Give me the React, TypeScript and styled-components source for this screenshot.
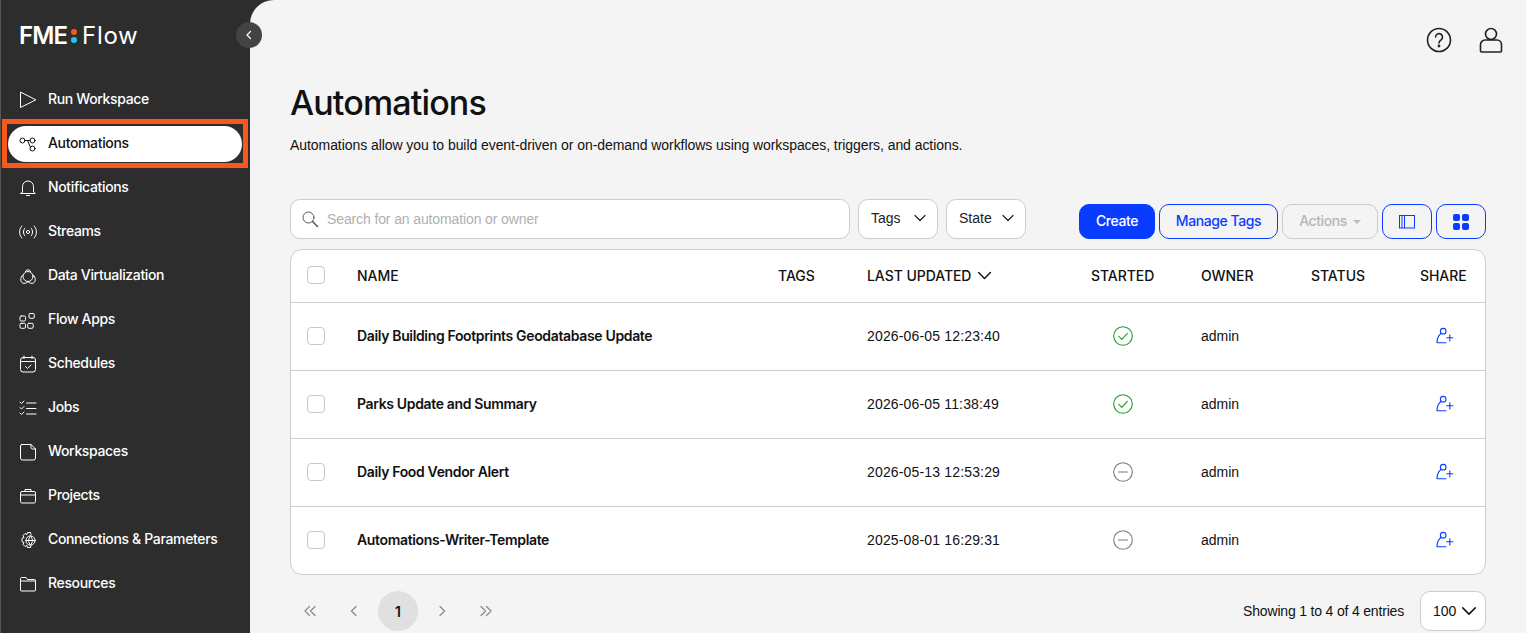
import React from 'react';
import styled, { createGlobalStyle } from 'styled-components';

const GlobalStyle = createGlobalStyle`
  html, body {
    margin: 0;
    padding: 0;
    height: 100%;
    overflow: hidden;
    background: #2d2d2d;
    font-family: 'Inter', 'Liberation Sans', sans-serif;
    color: #111;
  }
  * { box-sizing: border-box; }
`;

const BODY_FONT = "'Liberation Sans', Arial, sans-serif";

const Shell = styled.div`
  display: flex;
  width: 1526px;
  height: 633px;
  overflow: hidden;
  background: #2d2d2d;
`;

const Sidebar = styled.aside`
  position: relative;
  flex: 0 0 250px;
  border-left: 1px solid #555;
  padding-top: 25px;
`;

const Logo = styled.div`
  display: flex;
  align-items: center;
  height: 22px;
  margin-left: 18px;
  color: #fff;
  font-size: 24px;
  line-height: 22px;
`;

const LogoFme = styled.span`
  font-weight: 600;
  letter-spacing: -0.9px;
`;

const LogoDots = styled.span`
  display: flex;
  flex-direction: column;
  gap: 2px;
  margin: 0 5px 0 4px;
  &::before, &::after {
    content: '';
    width: 6px;
    height: 6px;
    border-radius: 50%;
    background: #f7581c;
  }
  &::after { background: #1fc8f4; }
`;

const LogoFlow = styled.span`
  font-weight: 400;
  letter-spacing: 0.7px;
`;

const CollapseButton = styled.div`
  position: absolute;
  top: 22px;
  left: 235px;
  z-index: 3;
  width: 26px;
  height: 26px;
  border-radius: 50%;
  background: #434343;
  color: #fff;
  display: flex;
  align-items: center;
  justify-content: center;
`;

const NavList = styled.nav`
  display: flex;
  flex-direction: column;
  margin-top: 31px;
`;

const NavItem = styled.div<{ $active?: boolean }>`
  position: relative;
  display: flex;
  align-items: center;
  gap: 11px;
  height: 36px;
  margin: 4px 8px 4px 7px;
  padding-left: 11px;
  border-radius: 18px;
  font-size: 14px;
  font-weight: 500;
  letter-spacing: -0.35px;
  color: ${p => (p.$active ? '#111' : '#fff')};
  background: ${p => (p.$active ? '#fff' : 'transparent')};
  svg { flex: 0 0 18px; }
`;

const NavLabel = styled.span`
  margin-bottom: 4px;
`;

const Highlight = styled.div`
  position: absolute;
  inset: -7px -6px -6px -6px;
  border: 5px solid #f7581c;
  pointer-events: none;
`;

const Main = styled.main`
  flex: 1;
  background: #f4f4f4;
  border-top-left-radius: 24px;
  padding: 0 40px;
  min-width: 0;
`;

const TopBar = styled.div`
  display: flex;
  justify-content: flex-end;
  align-items: center;
  gap: 26px;
  height: 80px;
  margin-right: -18px;
  color: #222;
`;

const Title = styled.h1`
  margin: 3px 0 0;
  font-size: 34px;
  line-height: 40px;
  font-weight: 500;
  letter-spacing: -0.85px;
  color: #111;
`;

const Description = styled.p`
  margin: 12px 0 0;
  font-family: ${BODY_FONT};
  font-size: 14px;
  line-height: 20px;
  letter-spacing: -0.065px;
  color: #111;
`;

const Toolbar = styled.div`
  display: flex;
  align-items: flex-start;
  margin-top: 44px;
  height: 40px;
`;

const SearchBox = styled.div`
  display: flex;
  align-items: center;
  gap: 8px;
  width: 560px;
  height: 40px;
  padding-left: 11px;
  background: #fff;
  border: 1px solid #ccc;
  border-radius: 10px;
  color: #555;
`;

const Placeholder = styled.span`
  font-family: ${BODY_FONT};
  font-size: 14px;
  letter-spacing: -0.12px;
  color: #b0b0b0;
`;

const SelectBox = styled.div<{ $width: number }>`
  display: flex;
  align-items: center;
  justify-content: space-between;
  width: ${p => p.$width}px;
  height: 40px;
  margin-left: 8px;
  padding: 0 9px 2px 12px;
  background: #fff;
  border: 1px solid #ccc;
  border-radius: 10px;
  font-family: ${BODY_FONT};
  font-size: 14px;
  color: #222;
`;

const ButtonGroup = styled.div`
  display: flex;
  gap: 4px;
  margin-left: auto;
  margin-top: 5px;
`;

const Button = styled.div<{ $variant: 'primary' | 'outline' | 'disabled'; $width: number }>`
  display: flex;
  align-items: center;
  justify-content: center;
  gap: 6px;
  width: ${p => p.$width}px;
  height: 35px;
  padding-bottom: ${p => (p.$variant === 'primary' || p.$variant === 'disabled' ? 2 : 0)}px;
  border-radius: 10px;
  font-size: 14px;
  font-weight: 500;
  letter-spacing: -0.42px;
  border: 1px solid ${p => (p.$variant === 'disabled' ? '#ccc' : '#0a3cff')};
  background: ${p => (p.$variant === 'primary' ? '#0a3cff' : 'transparent')};
  color: ${p => (p.$variant === 'primary' ? '#fff' : p.$variant === 'disabled' ? '#b5b5b5' : '#0a3cff')};
`;

const ButtonLabel = styled.span`
  margin-bottom: 2px;
`;

const Caret = styled.span`
  width: 0;
  height: 0;
  margin-top: 2px;
  border-left: 4px solid transparent;
  border-right: 4px solid transparent;
  border-top: 4px solid #bbb;
`;

const Table = styled.div`
  margin-top: 10px;
  background: #fff;
  border: 1px solid #ccc;
  border-radius: 12px;
`;

const Row = styled.div<{ $header?: boolean }>`
  display: grid;
  grid-template-columns: 66px 421px 89px 224px 110px 110px 109px 1fr;
  align-items: center;
  height: ${p => (p.$header ? 52 : 68)}px;
  padding-bottom: 2px;
  font-family: ${BODY_FONT};
  font-size: 14px;
  color: #111;
  & + & { border-top: 1px solid #ccc; }
`;

const HeaderCell = styled.div`
  display: flex;
  align-items: center;
  gap: 4px;
  font-family: 'Inter', sans-serif;
  font-weight: 500;
  letter-spacing: -0.05px;
`;

const CheckCell = styled.div`
  display: flex;
  padding-left: 16px;
`;

const Checkbox = styled.div`
  width: 18px;
  height: 18px;
  border: 1px solid #c8c8c8;
  border-radius: 4px;
  background: #fff;
`;

const NameCell = styled.div`
  font-family: 'Inter', sans-serif;
  font-weight: 600;
  letter-spacing: -0.35px;
`;

const DateCell = styled.div`
  letter-spacing: 0.16px;
`;

const StartedCell = styled.div`
  display: flex;
  justify-content: center;
  width: 64px;
`;

const ShareCell = styled.div`
  display: flex;
  justify-content: center;
  width: 49px;
  color: #0a3cff;
`;

const Footer = styled.div`
  display: flex;
  align-items: center;
  justify-content: space-between;
  margin-top: 16px;
  height: 40px;
`;

const Pager = styled.div`
  display: flex;
  align-items: center;
  gap: 4px;
`;

const PageButton = styled.div<{ $current?: boolean }>`
  display: flex;
  align-items: center;
  justify-content: center;
  width: 40px;
  height: 40px;
  border-radius: 50%;
  font-size: 14px;
  font-weight: 600;
  color: ${p => (p.$current ? '#111' : '#8e8e8e')};
  background: ${p => (p.$current ? '#e0e0e0' : 'transparent')};
`;

const Entries = styled.div`
  display: flex;
  align-items: center;
  gap: 16px;
  font-family: ${BODY_FONT};
  font-size: 14px;
  color: #111;
`;

const EntriesText = styled.span`
  letter-spacing: -0.18px;
`;

const PageSize = styled.div`
  display: flex;
  align-items: center;
  justify-content: space-between;
  width: 66px;
  height: 40px;
  padding: 0 6px 0 12px;
  background: #fff;
  border: 1px solid #ccc;
  border-radius: 10px;
`;

type IconProps = { size?: number; children: React.ReactNode };

const Icon = ({ size = 18, children }: IconProps) => (
  <svg width={size} height={size} viewBox="0 0 18 18" fill="none" stroke="currentColor" strokeWidth={1} strokeLinecap="round" strokeLinejoin="round">
    {children}
  </svg>
);

const Chevron = ({ size = 16 }: { size?: number }) => (
  <svg width={size} height={size} viewBox="0 0 16 16" fill="none" stroke="currentColor" strokeWidth={1.2} strokeLinecap="round" strokeLinejoin="round">
    <path d="M3 5.500 8 10.500l5-5" />
  </svg>
);

const PagerIcon = ({ d }: { d: string }) => (
  <svg width="16" height="16" viewBox="0 0 16 16" fill="none" stroke="currentColor" strokeWidth={1.4} strokeLinecap="round" strokeLinejoin="round">
    <path d={d} />
  </svg>
);

const navIcons: Record<string, React.ReactNode> = {
  run: <path d="M1.500 1.500v15L16.500 9z" />,
  automations: (
    <>
      <circle cx="3.500" cy="5.500" r="2.500" />
      <circle cx="13.500" cy="5.500" r="2.500" />
      <circle cx="13.500" cy="13.500" r="2.500" />
      <path d="M6 5.500h5M8.500 5.500l2.800 6.500" />
    </>
  ),
  notifications: (
    <>
      <path d="M3.500 13V7.500a5.500 5.500 0 0 1 11 0V13l1.800 1.500H1.700z" />
      <path d="M7.500 16.500h3" />
    </>
  ),
  streams: (
    <>
      <circle cx="9" cy="9" r="1.600" />
      <path d="M5.800 5.200c-1.800 2.200-1.800 5.400 0 7.600M12.200 5.200c1.800 2.200 1.800 5.400 0 7.600M2.800 3c-3 3.500-3 8.500 0 12M15.200 3c3 3.500 3 8.500 0 12" />
    </>
  ),
  data: (
    <>
      <circle cx="9" cy="9.500" r="5" />
      <path d="M6.300 4.600a2.900 2.900 0 0 1 5.400 0" />
      <path d="M3.700 8C.800 10.500 1 16.300 5 16.300c1.600 0 3-.6 4-1.600 1 1 2.400 1.600 4 1.600 4 0 4.200-5.800 1.300-8.300" />
    </>
  ),
  apps: (
    <>
      <rect x="1" y="5" width="5.500" height="5" rx="1.200" />
      <rect x="10" y="2.500" width="5.300" height="4.800" rx="1.200" />
      <rect x="1" y="12.300" width="5.500" height="5" rx="1.200" />
      <rect x="8.700" y="12.300" width="5.500" height="5" rx="1.200" />
    </>
  ),
  schedules: (
    <>
      <rect x="1.500" y="2.500" width="15" height="14.500" rx="2.500" />
      <path d="M1.500 6.500h15M5 1v2.500M13 1v2.500M6.500 11.500l2 2 3.500-3.500" />
    </>
  ),
  jobs: (
    <>
      <path d="M1 3l1.500 1.500L5 2M1 8.500 2.500 10 5 7.500M1 14l1.500 1.500L5 13" />
      <path d="M7.500 4h9.500M7.500 9.500h9.500M7.500 15h9.500" />
    </>
  ),
  workspaces: <path d="M3 1.500h9L16.500 6v9a2 2 0 0 1-2 2h-11a2 2 0 0 1-2-2V3a1.500 1.500 0 0 1 1.500-1.500zM12 1.500V4.500a1.500 1.500 0 0 0 1.500 1.500h3" />,
  projects: (
    <>
      <rect x="1.500" y="4.500" width="15" height="11.500" rx="1.500" />
      <path d="M6 4.500V2.500h6v2M1.500 8h15" />
    </>
  ),
  connections: (
    <>
      <path d="M12 3.400 11.500 1.500h-3l-.5 2-2-1-2 2 1 2-2 .8v3.400l2 .8-1 2 2 2 2-1 .5 2h3l.5-1.900" />
      <circle cx="11.500" cy="9.500" r="4.600" />
      <path d="M6.900 9.500h9.200M11.500 4.900c-2.600 3-2.600 6.200 0 9.200M11.500 4.900c2.600 3 2.600 6.200 0 9.200" />
    </>
  ),
  resources: <path d="M1.500 15V3.500a1 1 0 0 1 1-1h4.500l1.500 2h7a1 1 0 0 1 1 1V15a1 1 0 0 1-1 1h-13a1 1 0 0 1-1-1zM1.500 6h15" />,
};

const navItems = [
  { key: 'run', label: 'Run Workspace' },
  { key: 'automations', label: 'Automations', active: true },
  { key: 'notifications', label: 'Notifications' },
  { key: 'streams', label: 'Streams' },
  { key: 'data', label: 'Data Virtualization' },
  { key: 'apps', label: 'Flow Apps' },
  { key: 'schedules', label: 'Schedules' },
  { key: 'jobs', label: 'Jobs' },
  { key: 'workspaces', label: 'Workspaces' },
  { key: 'projects', label: 'Projects' },
  { key: 'connections', label: 'Connections & Parameters' },
  { key: 'resources', label: 'Resources' },
];

const rows = [
  { name: 'Daily Building Footprints Geodatabase Update', updated: '2026-06-05 12:23:40', started: true },
  { name: 'Parks Update and Summary', updated: '2026-06-05 11:38:49', started: true },
  { name: 'Daily Food Vendor Alert', updated: '2026-05-13 12:53:29', started: false },
  { name: 'Automations-Writer-Template', updated: '2025-08-01 16:29:31', started: false },
];

const StartedIcon = ({ on }: { on: boolean }) => (
  <svg width="20" height="20" viewBox="0 0 20 20" fill="none" stroke={on ? '#1f9d2b' : '#7a7a7a'} strokeWidth={1.1} strokeLinecap="round" strokeLinejoin="round">
    <circle cx="10" cy="10" r="9.300" />
    {on ? <path d="M5.800 10.300l3 3 5.500-6" /> : <path d="M5.500 10h9" />}
  </svg>
);

const ShareIcon = () => (
  <svg width="18" height="18" viewBox="0 0 18 18" fill="none" stroke="currentColor" strokeWidth={1.1} strokeLinecap="round" strokeLinejoin="round">
    <circle cx="7.200" cy="4.200" r="2.800" />
    <path d="M5 6.500C3 8 1 10.500 1 15.800h9M10.700 10.800h6.200M13.800 7.700v6.200" />
  </svg>
);

export default function App() {
  return (
    <>
      <GlobalStyle />
      <Shell>
        <Sidebar>
          <Logo>
            <LogoFme>FME</LogoFme>
            <LogoDots />
            <LogoFlow>Flow</LogoFlow>
          </Logo>
          <CollapseButton>
            <svg width="10" height="10" viewBox="0 0 10 10" fill="none" stroke="currentColor" strokeWidth={1.2} strokeLinecap="round" strokeLinejoin="round">
              <path d="M6.500 1.500 3 5l3.500 3.500" />
            </svg>
          </CollapseButton>
          <NavList>
            {navItems.map(item => (
              <NavItem key={item.key} $active={item.active}>
                <Icon>{navIcons[item.key]}</Icon>
                <NavLabel>{item.label}</NavLabel>
                {item.active && <Highlight />}
              </NavItem>
            ))}
          </NavList>
        </Sidebar>
        <Main>
          <TopBar>
            <svg width="26" height="26" viewBox="0 0 26 26" fill="none" stroke="currentColor" strokeWidth={1.6} strokeLinecap="round" strokeLinejoin="round">
              <circle cx="13" cy="13" r="11.500" />
              <path d="M9.500 10a3.500 3.500 0 1 1 5.500 3c-1.300.8-2 1.400-2 3" />
              <circle cx="13" cy="19" r=".6" fill="currentColor" />
            </svg>
            <svg width="26" height="26" viewBox="0 0 26 26" fill="none" stroke="currentColor" strokeWidth={1.6} strokeLinecap="round" strokeLinejoin="round">
              <path d="M7 13h12a4.500 4.500 0 0 1 4.500 4.500v6.500a1 1 0 0 1-1 1h-19a1 1 0 0 1-1-1v-6.500A4.500 4.500 0 0 1 7 13z" />
              <circle cx="13" cy="7" r="5.500" fill="#f4f4f4" />
            </svg>
          </TopBar>
          <Title>Automations</Title>
          <Description>Automations allow you to build event-driven or on-demand workflows using workspaces, triggers, and actions.</Description>
          <Toolbar>
            <SearchBox>
              <svg width="17" height="17" viewBox="0 0 17 17" fill="none" stroke="currentColor" strokeLinecap="round">
                <circle cx="6.500" cy="6.500" r="5.500" strokeWidth={1} />
                <path d="M10.500 10.500l5 5" strokeWidth={1.5} />
              </svg>
              <Placeholder>Search for an automation or owner</Placeholder>
            </SearchBox>
            <SelectBox $width={80}>Tags <Chevron /></SelectBox>
            <SelectBox $width={80}>State <Chevron /></SelectBox>
            <ButtonGroup>
              <Button $variant="primary" $width={76}>Create</Button>
              <Button $variant="outline" $width={119}><ButtonLabel>Manage Tags</ButtonLabel></Button>
              <Button $variant="disabled" $width={96}>Actions <Caret /></Button>
              <Button $variant="outline" $width={50}>
                <svg width="16" height="14" viewBox="0 0 16 14" fill="none" stroke="currentColor" strokeWidth={1}>
                  <rect x=".5" y=".5" width="15" height="12.500" />
                  <path d="M3 .5v12.500M5.500 .5v12.500" />
                </svg>
              </Button>
              <Button $variant="outline" $width={50}>
                <svg width="16" height="16" viewBox="0 0 16 16" fill="currentColor">
                  <rect x="0" y="0" width="7" height="7" rx="2" />
                  <rect x="9" y="0" width="7" height="7" rx="2" />
                  <rect x="0" y="9" width="7" height="7" rx="2" />
                  <rect x="9" y="9" width="7" height="7" rx="2" />
                </svg>
              </Button>
            </ButtonGroup>
          </Toolbar>
          <Table>
            <Row $header>
              <CheckCell><Checkbox /></CheckCell>
              <HeaderCell>NAME</HeaderCell>
              <HeaderCell>TAGS</HeaderCell>
              <HeaderCell>LAST UPDATED <Chevron size={19} /></HeaderCell>
              <HeaderCell>STARTED</HeaderCell>
              <HeaderCell>OWNER</HeaderCell>
              <HeaderCell>STATUS</HeaderCell>
              <HeaderCell>SHARE</HeaderCell>
            </Row>
            {rows.map(row => (
              <Row key={row.name}>
                <CheckCell><Checkbox /></CheckCell>
                <NameCell>{row.name}</NameCell>
                <div />
                <DateCell>{row.updated}</DateCell>
                <StartedCell><StartedIcon on={row.started} /></StartedCell>
                <div>admin</div>
                <div />
                <ShareCell><ShareIcon /></ShareCell>
              </Row>
            ))}
          </Table>
          <Footer>
            <Pager>
              <PageButton><PagerIcon d="M7.500 3.500 3 8l4.500 4.500M13 3.500 8.500 8l4.500 4.500" /></PageButton>
              <PageButton><PagerIcon d="M10 3.500 5.500 8l4.500 4.500" /></PageButton>
              <PageButton $current>1</PageButton>
              <PageButton><PagerIcon d="M6 3.500 10.500 8 6 12.500" /></PageButton>
              <PageButton><PagerIcon d="M3 3.500 7.500 8 3 12.500M8.500 3.500 13 8l-4.500 4.500" /></PageButton>
            </Pager>
            <Entries>
              <EntriesText>Showing 1 to 4 of 4 entries</EntriesText>
              <PageSize>100 <Chevron size={20} /></PageSize>
            </Entries>
          </Footer>
        </Main>
      </Shell>
    </>
  );
}
